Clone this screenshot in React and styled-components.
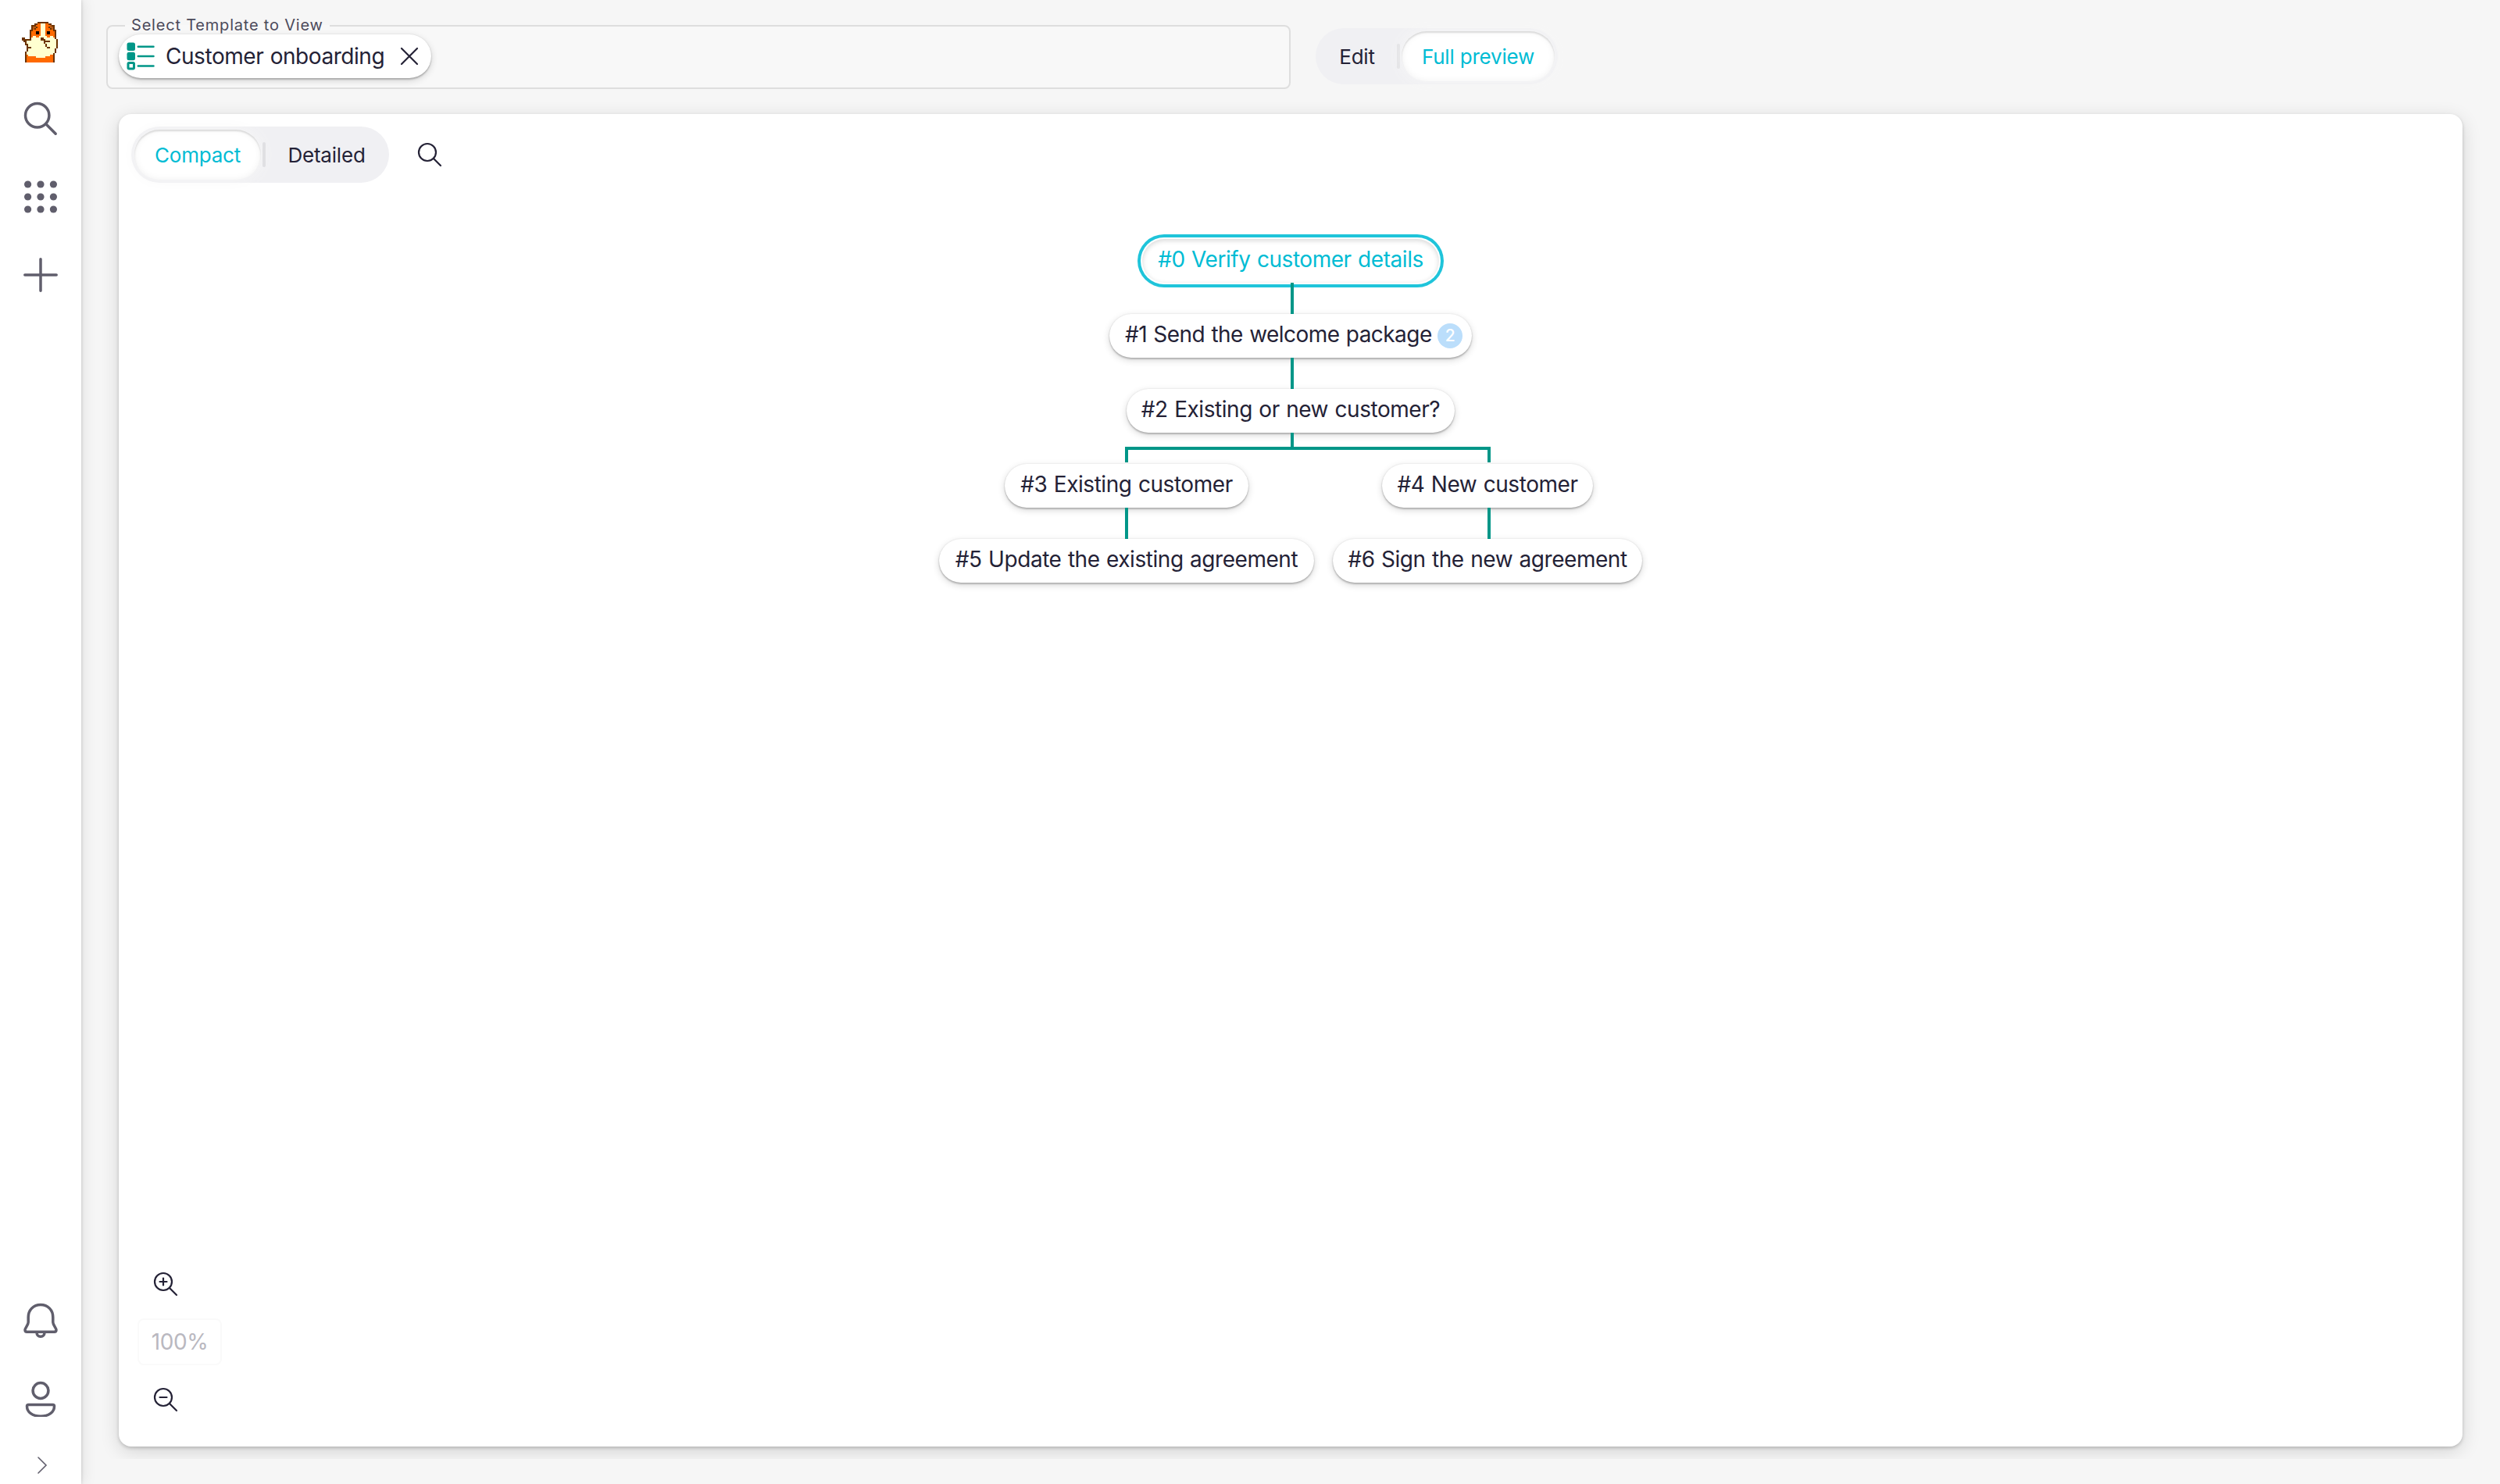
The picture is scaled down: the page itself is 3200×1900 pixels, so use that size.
import React from 'react';
import styled, { createGlobalStyle, css } from 'styled-components';

const HAMSTER = [
  '..........ddddddd.......',
  '........ddoowwwoodd.....',
  '......dddooowwwooobdd...',
  '......dbbdoowwwoodbbd...',
  '......dbdooowwwooodbd...',
  '.....ddooooowwwooooodd..',
  '.....doookkowwwokkoood..',
  '.....doookkowwwokkoood..',
  '.....doooooowwwooooood..',
  '.....dowwoowwwwwoowwod..',
  'dd...dwwwwwwddwwwwwwwd..',
  'ddddddwwwwwwdddwwwwwwwd.',
  '.ddwwwwwwwwwwwddddwwwwd.',
  '..dwwwwwwwwwwwdwwwwwwwd.',
  '..ddwwwwwwwwwwwdwwwwwwd.',
  '...dwwwwwwwwwwwdwwwwwwd.',
  '...dddwwwwwwwwwwddwwwwd.',
  '...dwwwwwwwwwwwwwwwwwd..',
  '...dwwwwwwwwwwwwwwwwwd..',
  '..dwwwwwwwwwwwwwwwwwwd..',
  '..dwwwwwwwwwwwwwwwwwd...',
  '..dowwwwwwwwwwwwwwood...',
  '..doooooowwwwwwoooood...',
  '..doooooooooooooooood...',
  '..doooooooooooooooood...',
  '..doooooooooooooooood...',
];

const COLORS = { d: '#6b3300', b: '#b85a14', o: '#ff6a00', w: '#ffffd0', k: '#000' };

const Hamster = () => (
  <svg width="48" height="52" viewBox="0 0 24 26" shapeRendering="crispEdges">
    {HAMSTER.map((row, y) =>
      row.split('').map((c, x) =>
        COLORS[c] ? <rect key={x + '-' + y} x={x} y={y} width="1" height="1" fill={COLORS[c]} /> : null
      )
    )}
  </svg>
);

const Lens = ({ sign }) => (
  <svg width="32" height="32" viewBox="0 0 32 32" fill="none" stroke="#242236" strokeWidth="2.2" strokeLinecap="round">
    <circle cx="13" cy="13" r="11" />
    <path d="M21 21l9 9" />
    {sign && <path d="M8.500 13h9" />}
    {sign === 'plus' && <path d="M13 8.500v9" />}
  </svg>
);

const NavIcon = ({ children }) => (
  <svg width="48" height="48" viewBox="0 0 48 48" fill="none" stroke="#605e6c" strokeWidth="3.5" strokeLinecap="round" strokeLinejoin="round">
    {children}
  </svg>
);

const Task = ({ children, width, badge, selected }) => (
  <StyledTask $width={width} $badge={badge} $selected={selected}>
    {children}
    {badge && <StyledBadge>{badge}</StyledBadge>}
  </StyledTask>
);

const App = () => (
  <StyledPage>
    <GlobalStyle />
    <StyledSidebar>
      <StyledAvatar>
        <Hamster />
      </StyledAvatar>
      <StyledNavItem>
        <NavIcon>
          <circle cx="19.7" cy="19.7" r="15.2" />
          <path d="M31 31l12.2 12.2" />
        </NavIcon>
      </StyledNavItem>
      <StyledNavItem>
        <NavIcon>
          {[8, 24, 40].map((y) =>
            [7.6, 24, 40.4].map((x) => <circle key={x + '-' + y} cx={x} cy={y} r="4.6" fill="#605e6c" stroke="none" />)
          )}
        </NavIcon>
      </StyledNavItem>
      <StyledNavItem>
        <NavIcon>
          <path d="M24 3.800v40.400M3.800 24h40.400" />
        </NavIcon>
      </StyledNavItem>
      <StyledSpacer />
      <StyledNavItem>
        <NavIcon>
          <path d="M24 4.500c-9.500 0-15.800 7-15.800 16V27c0 3-4.200 7.500-4.200 9.700C4 38.400 5 39.200 6.500 39.200h35c1.500 0 2.500-.8 2.500-2.500 0-2.200-4.200-6.700-4.200-9.700v-6.500c0-9-6.300-16-15.800-16z" />
          <path d="M19 40c0 3 2 5.300 5 5.300s5-2.300 5-5.300" />
        </NavIcon>
      </StyledNavItem>
      <StyledNavItem>
        <NavIcon>
          <circle cx="24" cy="14.500" r="9.900" />
          <path d="M8.500 32.500h31c1.300 0 2 .7 2 2 0 7.500-7 12.700-17.500 12.700S6.500 42 6.500 34.500c0-1.300.7-2 2-2z" />
        </NavIcon>
      </StyledNavItem>
      <StyledExpand>
        <svg width="16" height="24" viewBox="0 0 16 24" fill="none" stroke="#605e6c" strokeWidth="1.600" strokeLinecap="round">
          <path d="M3 2l10 10L3 22" />
        </svg>
      </StyledExpand>
    </StyledSidebar>
    <StyledMain>
      <StyledHeader>
        <StyledSelect>
          <legend>Select Template to View</legend>
          <StyledChip>
            <svg width="36" height="36" viewBox="0 0 36 36" fill="none" stroke="#009688" strokeWidth="2.500" strokeLinecap="round">
              <rect x="0.500" y="0.500" width="10.500" height="10.500" rx="2.500" fill="#009688" stroke="none" />
              <rect x="0.500" y="12.800" width="10.500" height="10.500" rx="2.500" fill="#009688" stroke="none" />
              <rect x="2" y="26.500" width="7.500" height="7.500" rx="1.200" strokeWidth="3" />
              <path d="M14.800 5.700H34.500M14.800 18H34.500M14.800 30.500H34.500" />
            </svg>
            <span>Customer onboarding</span>
            <svg width="24" height="24" viewBox="0 0 24 24" stroke="#242236" strokeWidth="2.200" strokeLinecap="round">
              <path d="M2 2l20 20M22 2L2 22" />
            </svg>
          </StyledChip>
        </StyledSelect>
        <StyledToggle>
          <StyledOption $width={98}>Edit</StyledOption>
          <StyledDivider />
          <StyledOption $width={196} $active>Full preview</StyledOption>
        </StyledToggle>
      </StyledHeader>
      <StyledStage>
        <StyledPanel>
          <StyledToolbar>
            <StyledToggle>
              <StyledOption $width={162} $active>Compact</StyledOption>
              <StyledDivider />
              <StyledOption $width={152}>Detailed</StyledOption>
            </StyledToggle>
            <Lens />
          </StyledToolbar>
          <StyledTree>
            <Task width={380} selected>#0 Verify customer details</Task>
            <StyledLine $shift />
            <Task width={464} badge={2}>#1 Send the welcome package</Task>
            <StyledLine $shift />
            <Task width={420}>#2 Existing or new customer?</Task>
            <StyledLine $shift $short />
            <StyledBranches>
              <StyledBranch>
                <StyledElbowLeft />
                <Task width={312}>#3 Existing customer</Task>
                <StyledLine />
                <Task width={480}>#5 Update the existing agreement</Task>
              </StyledBranch>
              <StyledBranch>
                <StyledElbowRight />
                <Task width={270}>#4 New customer</Task>
                <StyledLine $shift />
                <Task width={396}>#6 Sign the new agreement</Task>
              </StyledBranch>
            </StyledBranches>
          </StyledTree>
          <StyledZoom>
            <Lens sign="plus" />
            <StyledPercent>100%</StyledPercent>
            <Lens sign="minus" />
          </StyledZoom>
        </StyledPanel>
      </StyledStage>
    </StyledMain>
  </StyledPage>
);

export default App;

const GlobalStyle = createGlobalStyle`
  * {
    box-sizing: border-box;
  }

  body {
    margin: 0;
    background: #f6f6f6;
    color: #242236;
    font-family: Inter, "Liberation Sans", sans-serif;
  }

  svg {
    display: block;
    flex-shrink: 0;
  }
`;

const StyledPage = styled.div`
  display: flex;
  height: 1900px;
  overflow: hidden;
`;

const StyledSidebar = styled.nav`
  z-index: 1;
  display: flex;
  flex-direction: column;
  flex-shrink: 0;
  width: 104px;
  background: #fff;
  box-shadow: 0 0 4px rgba(0, 0, 0, 0.18), 4px 0 16px rgba(0, 0, 0, 0.08);
`;

const StyledAvatar = styled.div`
  height: 102px;
  padding: 28px 0 0 28px;
`;

const StyledNavItem = styled.div`
  display: flex;
  align-items: center;
  justify-content: center;
  height: 100px;
`;

const StyledSpacer = styled.div`
  flex: 1;
`;

const StyledExpand = styled.div`
  height: 60px;
  padding: 24px 0 0 46px;
`;

const StyledMain = styled.main`
  display: flex;
  flex: 1;
  flex-direction: column;
`;

const StyledHeader = styled.header`
  display: flex;
  align-items: flex-start;
  gap: 32px;
  height: 130px;
  padding: 32px 32px 0;
`;

const StyledSelect = styled.fieldset`
  width: 1516px;
  height: 82px;
  margin: 0;
  padding: 10px 14px 0;
  border: 2px solid #dedede;
  border-radius: 8px;
  background: #f8f8f8;

  legend {
    height: 2px;
    margin-left: 8px;
    padding: 0 8px;
    font-size: 20px;
    line-height: 0;
    letter-spacing: 0.8px;
    color: #4c4a5b;
  }
`;

const pillShadow = css`
  box-shadow: 0 2px 2px rgba(0, 0, 0, 0.2), 0 3px 10px rgba(0, 0, 0, 0.16), 0 0 2px rgba(0, 0, 0, 0.12);
`;

const bodyText = css`
  font-size: 28px;
  letter-spacing: -0.45px;
  word-spacing: 1px;
  white-space: nowrap;
`;

const StyledChip = styled.div`
  display: flex;
  align-items: center;
  width: 400px;
  height: 56px;
  padding: 0 16px 0 10px;
  border-radius: 28px;
  background: #fff;
  ${bodyText}
  ${pillShadow}

  span {
    flex: 1;
    padding-left: 14px;
  }
`;

const StyledToggle = styled.div`
  display: flex;
  align-items: center;
  height: 72px;
  margin-top: 4px;
  padding: 4px;
  border-radius: 36px;
  background: #f0f0f3;
`;

const StyledOption = styled.div`
  display: flex;
  align-items: center;
  justify-content: center;
  width: ${({ $width }) => $width}px;
  height: 64px;
  border-radius: 32px;
  font-size: 26px;
  letter-spacing: -0.2px;
  white-space: nowrap;
  ${({ $active }) =>
    $active &&
    css`
      background: #fff;
      color: #00bcd4;
      box-shadow: inset 0 2px 2px rgba(0, 0, 0, 0.12), inset 0 0 10px rgba(0, 0, 0, 0.06), 0 0 20px #f7f7f7;
    `}
`;

const StyledDivider = styled.div`
  width: 4px;
  height: 32px;
  margin: 0 2px;
  border-radius: 2px;
  background: #e0e0e3;
`;

/* trims the panel shadow 16px below the card */
const StyledStage = styled.section`
  display: flex;
  height: 1738px;
  padding: 16px 48px;
  overflow: hidden;
`;

const StyledPanel = styled.div`
  display: flex;
  flex: 1;
  flex-direction: column;
  border-radius: 16px;
  background: #fff;
  box-shadow: 0 2px 4px rgba(0, 0, 0, 0.18), 0 6px 24px rgba(0, 0, 0, 0.14);
`;

const StyledToolbar = styled.div`
  display: flex;
  align-items: center;
  gap: 36px;
  height: 160px;
  padding: 12px 16px 72px;

  > svg {
    margin-top: 4px;
  }
`;

const StyledTree = styled.div`
  display: flex;
  flex: 1;
  flex-direction: column;
  align-items: center;
`;

const StyledTask = styled.div`
  z-index: 1;
  display: flex;
  align-items: center;
  justify-content: ${({ $badge }) => ($badge ? 'space-between' : 'center')};
  width: ${({ $width }) => $width}px;
  height: 56px;
  padding: 0 ${({ $badge }) => ($badge ? '12px 4px 20px' : '0 4px')};
  border-radius: 28px;
  background: #fff;
  ${bodyText}
  ${({ $badge }) => $badge && 'letter-spacing: -0.55px;'}
  ${pillShadow}
  ${({ $selected }) =>
    $selected &&
    css`
      color: #00bcd4;
      box-shadow: inset 0 2px 6px rgba(0, 0, 0, 0.16), 0 0 0 2px #fff, 0 0 0 6px #1fc4da;
    `}
`;

const StyledBadge = styled.span`
  width: 32px;
  height: 32px;
  margin-top: 4px;
  border-radius: 16px;
  background: #bbdefb;
  color: #fff;
  font-size: 21px;
  font-weight: 500;
  line-height: 32px;
  text-align: center;
`;

const StyledLine = styled.div`
  z-index: 2;
  width: 4px;
  height: ${({ $short }) => ($short ? 18 : 40)}px;
  margin-left: ${({ $shift }) => ($shift ? 4 : 0)}px;
  background: #009688;
`;

const StyledBranches = styled.div`
  display: flex;
  gap: 24px;
`;

const StyledBranch = styled.div`
  display: flex;
  flex-direction: column;
  align-items: center;
`;

const StyledElbow = styled.div`
  height: 20px;
  margin-bottom: 2px;
  border: 0 solid #009688;
  border-top-width: 4px;
`;

/* each elbow reaches half of the 24px gap, so the two meet in the middle */
const StyledElbowLeft = styled(StyledElbow)`
  align-self: flex-end;
  width: calc(50% + 14px);
  margin-right: -12px;
  border-left-width: 4px;
`;

const StyledElbowRight = styled(StyledElbow)`
  align-self: flex-start;
  width: calc(50% + 16px);
  margin-left: -12px;
  border-right-width: 4px;
`;

const StyledZoom = styled.div`
  display: flex;
  flex-direction: column;
  align-items: flex-start;
  padding: 0 0 44px 24px;

  > svg {
    margin-left: 20px;
  }
`;

const StyledPercent = styled.div`
  width: 108px;
  height: 60px;
  margin: 28px 0;
  border: 2px solid #fafafa;
  border-radius: 8px;
  color: #b9b8bf;
  line-height: 56px;
  text-align: center;
  ${bodyText}
`;
